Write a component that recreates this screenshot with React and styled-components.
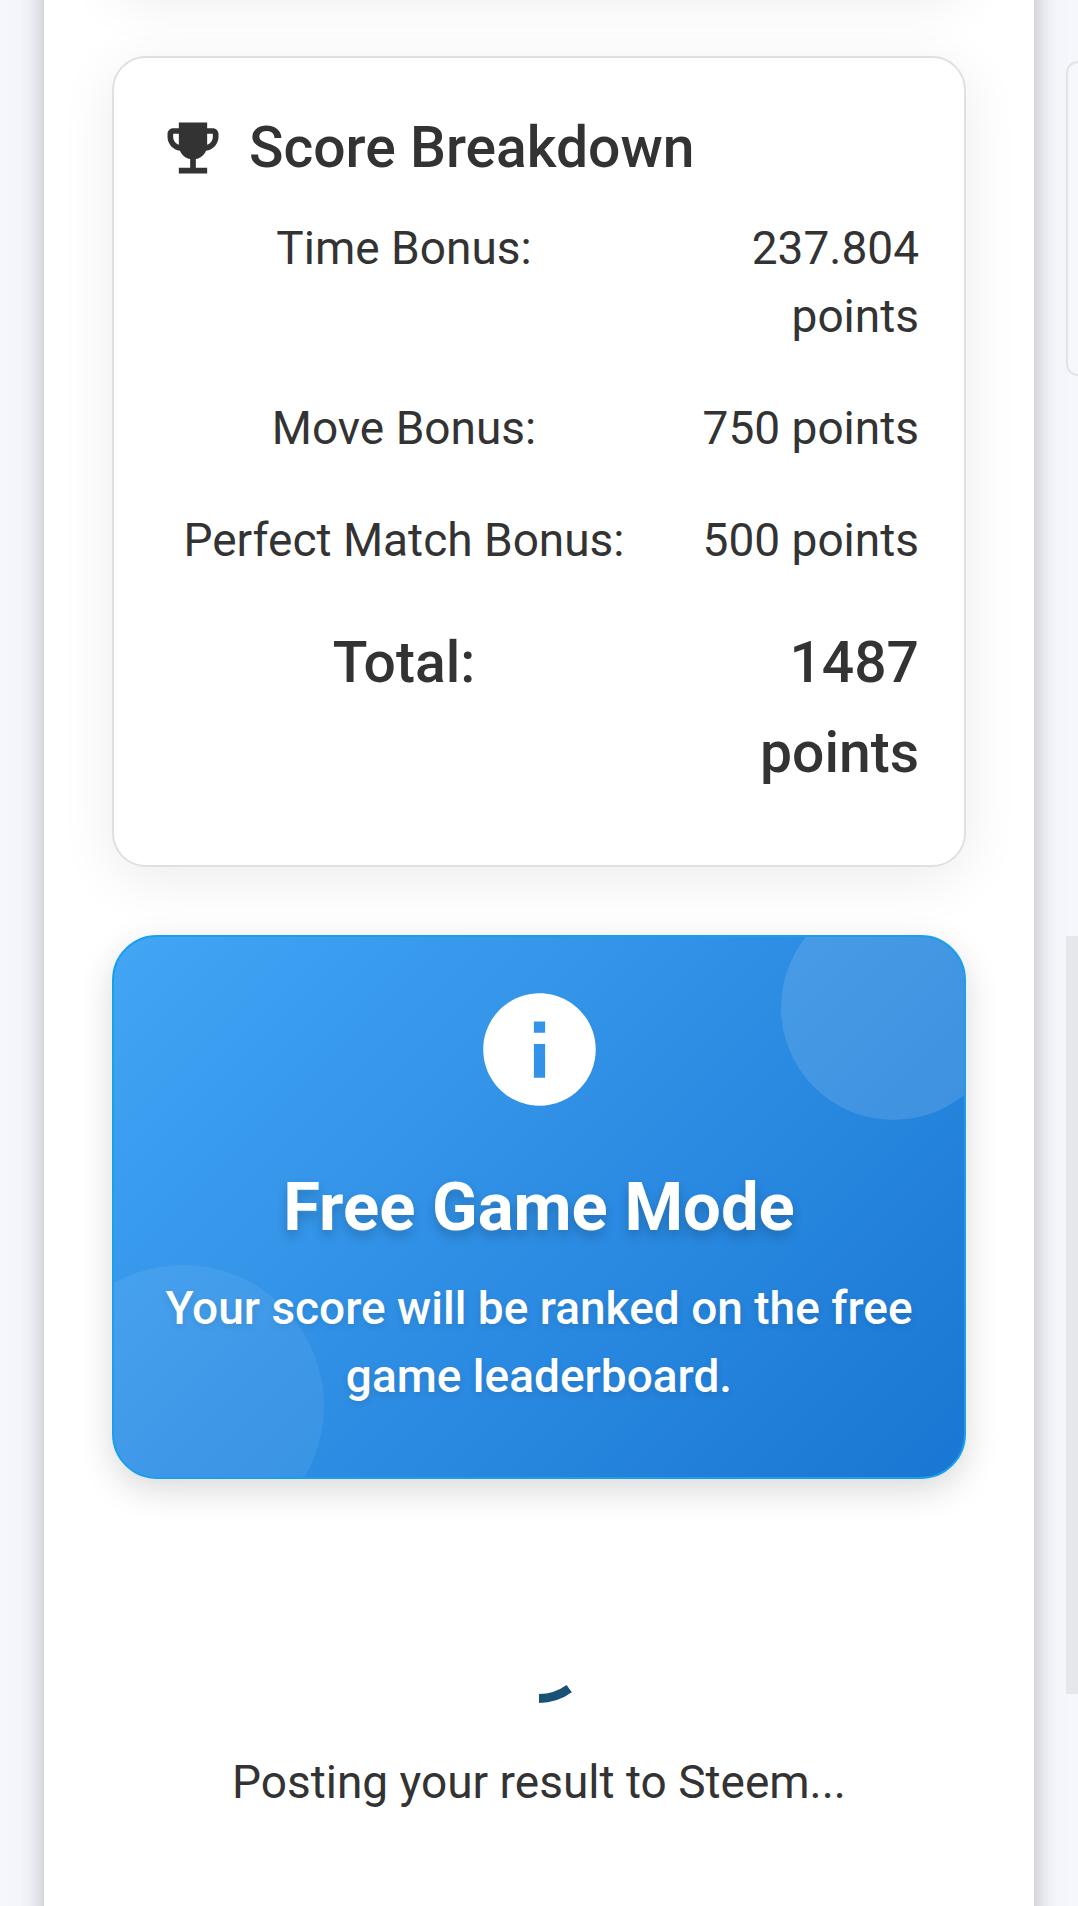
import React from "react";
import styled, { createGlobalStyle } from "styled-components";

const scores = [
  { label: "Time Bonus:", value: "237.804 points" },
  { label: "Move Bonus:", value: "750 points" },
  { label: "Perfect Match Bonus:", value: "500 points" },
  { label: "Total:", value: "1487 points", total: true },
];

const App = () => {
  return (
    <Page>
      <GlobalStyle />
      <Dialog>
        <PreviousCard />
        <ScoreCard>
          <ScoreTitle>
            <svg viewBox="0 0 24 24" aria-hidden="true">
              <path d="M19 5h-2V3H7v2H5c-1.1 0-2 .9-2 2v1c0 2.550 1.920 4.630 4.390 4.940.630 1.500 1.980 2.630 3.610 2.960V19H7v2h10v-2h-4v-3.100c1.630-.330 2.980-1.460 3.610-2.960C19.080 12.630 21 10.550 21 8V7c0-1.100-.9-2-2-2zM5 8V7h2v3.820C5.840 10.400 5 9.300 5 8zm14 0c0 1.300-.84 2.400-2 2.820V7h2v1z" />
            </svg>
            Score Breakdown
          </ScoreTitle>
          <ScoreTable>
            <tbody>
              {scores.map(({ label, value, total }) => (
                <ScoreRow key={label} $total={total}>
                  <th scope="row">{label}</th>
                  <td>{value}</td>
                </ScoreRow>
              ))}
            </tbody>
          </ScoreTable>
        </ScoreCard>
        <ModeCard>
          <svg viewBox="0 0 24 24" aria-hidden="true">
            <path d="M12 2C6.480 2 2 6.480 2 12s4.480 10 10 10 10-4.480 10-10S17.520 2 12 2zm1 15h-2v-6h2v6zm0-8h-2V7h2v2z" />
          </svg>
          <h2>Free Game Mode</h2>
          <p>Your score will be ranked on the free game leaderboard.</p>
        </ModeCard>
        <Status role="status">
          <svg viewBox="0 0 112 112" aria-hidden="true">
            <path d="M86.200 97.600A51.400 51.400 0 0 1 56 107.400" />
          </svg>
          <p>Posting your result to Steem...</p>
        </Status>
      </Dialog>
      {/* edge of the game board behind the dialog */}
      <Behind>
        <BehindCard />
        <BehindBoard />
      </Behind>
    </Page>
  );
};

const GlobalStyle = createGlobalStyle`
  * {
    box-sizing: border-box;
  }
  body {
    margin: 0;
    background: #f5f7fc;
    color: #333;
    font-family: Roboto, "Liberation Sans", sans-serif;
    font-size: 46px;
    line-height: 68px;
  }
  h2,
  p {
    margin: 0;
  }
`;

const Page = styled.div`
  display: grid;
  grid-template-columns: minmax(0, 1fr) 44px;
  min-height: 100vh;
  padding-left: 44px;
  overflow: hidden;
`;

/* runs past both ends of the screen */
const Dialog = styled.main`
  position: relative;
  z-index: 1;
  display: flex;
  flex-direction: column;
  margin: -60px 0;
  padding: 60px 68px 148px;
  background: #fff;
  box-shadow: 0 0 22px rgba(0, 0, 0, 0.24), 0 0 50px rgba(0, 0, 0, 0.04);
`;

const Card = styled.section`
  border: 2px solid #e0e0e0;
  border-radius: 34px;
  background: #fff;
  box-shadow: 0 11px 56px rgba(0, 0, 0, 0.08);
`;

/* scrolled out of view, only its shadow reaches the screen */
const PreviousCard = styled(Card)`
  height: 100px;
  margin-top: -112px;
`;

const ScoreCard = styled(Card)`
  margin-top: 68px;
  padding: 45px;
`;

const ScoreTitle = styled.h2`
  display: flex;
  align-items: center;
  gap: 22px;
  font-size: 57px;
  font-weight: 500;
  line-height: 89px;
  svg {
    width: 68px;
    height: 68px;
    fill: currentColor;
  }
`;

const ScoreTable = styled.table`
  width: 100%;
  table-layout: fixed;
  border-collapse: collapse;
`;

const ScoreRow = styled.tr`
  font-size: ${({ $total }) => ($total ? "57px" : "46px")};
  line-height: ${({ $total }) => ($total ? "90px" : "68px")};
  th,
  td {
    padding: 22px 0;
    font-weight: ${({ $total }) => ($total ? 500 : 400)};
    vertical-align: top;
  }
  th {
    text-align: center;
  }
  td {
    width: 270px;
    text-align: right;
  }
`;

const ModeCard = styled.section`
  position: relative;
  display: flex;
  flex-direction: column;
  align-items: center;
  margin-top: 68px;
  padding: 45px 45px 67px;
  overflow: hidden;
  border: 2px solid #1aa0ea;
  border-radius: 45px;
  background: linear-gradient(135deg, #42a5f5 0%, #1976d2 100%);
  box-shadow: 0 11px 34px rgba(0, 0, 0, 0.15);
  color: #fff;
  text-align: center;
  &::before,
  &::after {
    content: "";
    position: absolute;
    border-radius: 50%;
  }
  &::before {
    top: -42px;
    right: -42px;
    width: 225px;
    height: 225px;
    background: rgba(255, 255, 255, 0.12);
  }
  &::after {
    bottom: -70px;
    left: -72px;
    width: 282px;
    height: 282px;
    background: rgba(255, 255, 255, 0.07);
  }
  svg {
    width: 135px;
    height: 135px;
    fill: currentColor;
  }
  h2 {
    margin: 45px 0 22px;
    font-size: 67px;
    font-weight: 700;
    line-height: 90px;
    text-shadow: 0 6px 11px rgba(0, 0, 0, 0.2);
  }
  p {
    font-weight: 500;
    text-shadow: 0 3px 6px rgba(0, 0, 0, 0.1);
  }
`;

const Status = styled.div`
  display: flex;
  flex-direction: column;
  align-items: center;
  gap: 45px;
  margin-top: 112px;
  text-align: center;
  svg {
    width: 112px;
    height: 112px;
    fill: none;
    stroke: #1a5276;
    stroke-width: 9;
  }
`;

const Behind = styled.aside`
  display: flex;
  flex-direction: column;
  gap: 560px;
  padding: 61px 0 0 32px;
`;

const BehindCard = styled.div`
  height: 315px;
  border: 2px solid #e3e4e8;
  border-right: 0;
  border-radius: 16px 0 0 16px;
  background: #f7f8fb;
`;

const BehindBoard = styled.div`
  height: 758px;
  background: #e6e7eb;
`;

export default App;
